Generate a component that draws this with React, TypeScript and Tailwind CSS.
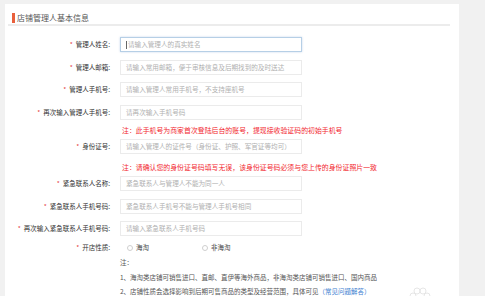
const font = { fontFamily: '"Noto Sans CJK SC", "Noto Sans", sans-serif' };

interface FieldRowProps {
  label: string;
  placeholder: string;
  focused?: boolean;
  className?: string;
}

function FieldRow({ label, placeholder, focused, className }: FieldRowProps) {
  return (
    <div className={`flex h-[15px] items-center ${className ?? ""}`}>
      <div className="w-[105px] shrink-0 whitespace-nowrap text-right text-[6.5px] leading-[15px] text-[#333]">
        <span className="mr-[3px] text-[#e4393c]">*</span>
        {label}
      </div>
      <div
        className={`ml-[10px] flex h-[15px] w-[182px] items-center whitespace-nowrap border bg-white pl-[5px] text-[6.6px] text-[#b0b0b0] ${
          focused
            ? "border-[#b6cfe6] shadow-[0_0_2px_rgba(120,160,210,0.4)]"
            : "border-[#ebebeb]"
        }`}
      >
        {focused && <span className="mr-[1px] h-[8px] w-px bg-[#666]" />}
        {placeholder}
      </div>
    </div>
  );
}

function Note({ text, className }: { text: string; className?: string }) {
  return (
    <div
      className={`ml-[117px] h-[12px] whitespace-nowrap text-[6.9px] leading-[12px] text-[#f2262e] ${className ?? ""}`}
    >
      {text}
    </div>
  );
}

function Radio({ label }: { label: string }) {
  return (
    <div className="flex items-center gap-[3px]">
      <span className="h-[6px] w-[6px] rounded-full border border-[#cfcfcf]" />
      <span>{label}</span>
    </div>
  );
}

export default function App() {
  return (
    <div className="h-[296px] w-[485px] overflow-hidden bg-[#f1f1f1] pt-[4px]" style={font}>
      <div className="relative ml-[5px] h-[300px] w-[454px] bg-white">
        {/* heading */}
        <div className="flex h-[20px] items-end pl-[7px]">
          <span className="mb-[1px] h-[10px] w-[3px] bg-[#e9603c]" />
          <span className="ml-[2px] text-[8px] leading-[12px] text-[#555]">
            店铺管理人基本信息
          </span>
        </div>
        <div className="ml-[3px] h-[2px] w-[442px] bg-[#ececec]" />

        <FieldRow className="mt-[11px]" label="管理人姓名:" placeholder="请输入管理人的真实姓名" focused />
        <FieldRow className="mt-[8px]" label="管理人邮箱:" placeholder="请输入常用邮箱，便于审核信息及后期找到的及时送达" />
        <FieldRow className="mt-[7px]" label="管理人手机号:" placeholder="请输入管理人常用手机号，不支持座机号" />
        <FieldRow className="mt-[8px]" label="再次输入管理人手机号:" placeholder="请再次输入手机号码" />
        <Note className="mt-[4px]" text="注：此手机号为商家首次登陆后台的账号，提现接收验证码的初始手机号" />
        <FieldRow className="mt-[3px]" label="身份证号:" placeholder="请输入管理人的证件号（身份证、护照、军官证等均可）" />
        <Note className="mt-[7px]" text="注：请确认您的身份证号码填写无误，该身份证号码必须与您上传的身份证照片一致" />
        <FieldRow className="mt-[3px]" label="紧急联系人名称:" placeholder="紧急联系人与管理人不能为同一人" />
        <FieldRow className="mt-[8px]" label="紧急联系人手机号码:" placeholder="紧急联系人手机号不能与管理人手机号相同" />
        <FieldRow className="mt-[7px]" label="再次输入紧急联系人手机号码:" placeholder="请输入紧急联系人手机号码" />

        <div className="mt-[6px] flex h-[12px] items-center text-[6.5px]">
          <div className="w-[105px] text-right text-[#333]">
            <span className="mr-[3px] text-[#e4393c]">*</span>开店性质:
          </div>
          <div className="ml-[17px] flex items-center gap-[53px] text-[#444]">
            <Radio label="海淘" />
            <Radio label="非海淘" />
          </div>
        </div>

        <div className="ml-[115px] text-[6.5px] text-[#555]">
          <div className="mt-[2px] h-[12px] leading-[12px]">注：</div>
          <div className="mt-[3px] h-[12px] whitespace-nowrap leading-[12px]">
            1、海淘类店铺可销售进口、直邮、直伊等海外商品，非海淘类店铺可销售进口、国内商品
          </div>
          <div className="mt-[2px] h-[12px] whitespace-nowrap leading-[12px]">
            2、店铺性质会选择影响到后期可售商品的类型及经营范围，具体可见
            <span className="text-[#3b7dd0]">（常见问题解答）</span>
          </div>
        </div>

        {/* faint watermark */}
        <svg
          className="absolute left-[403px] top-[282px]"
          width="24"
          height="16"
          viewBox="0 0 24 16"
          fill="none"
          stroke="#e6e6e6"
          strokeWidth="1"
        >
          <circle cx="9" cy="5" r="3" />
          <circle cx="15" cy="5" r="3" />
          <circle cx="5" cy="10" r="3" />
          <circle cx="19" cy="10" r="3" />
        </svg>
      </div>
    </div>
  );
}
